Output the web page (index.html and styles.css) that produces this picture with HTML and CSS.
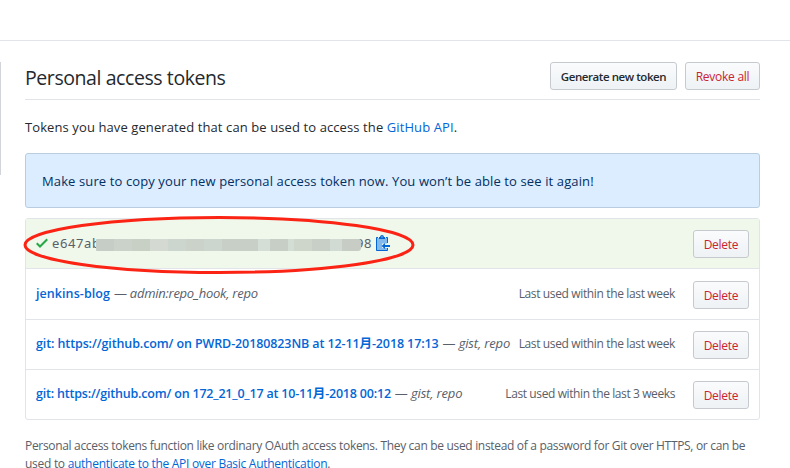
FILE: index.html
```html
<!DOCTYPE html>
<html lang="en">
<head>
<meta charset="utf-8">
<title>Personal access tokens</title>
<link rel="stylesheet" href="styles.css">
</head>
<body>
<header class="topbar"></header>
<div class="layout">
  <aside class="sidebar"></aside>
  <main class="content">
    <div class="subhead">
      <h2 class="title">Personal access tokens</h2>
      <div class="actions">
        <button class="btn btn-generate">Generate new token</button>
        <button class="btn danger btn-revoke">Revoke all</button>
      </div>
    </div>
    <p class="intro">Tokens you have generated that can be used to access the <a>GitHub API</a>.</p>
    <div class="flash"><span>Make sure to copy your new personal access token now. You won’t be able to see it again!</span></div>
    <ul class="tokens">
      <li class="row fresh">
        <svg class="check" viewBox="0 0 12 16" width="12" height="16"><path d="M12 5l-8 8-4-4 1.5-1.5L4 10l6.500-6.500z"/></svg>
        <code class="value">e647ab</code><span class="mask"></span><code class="value tail">98</code>
        <svg class="clip" viewBox="0 0 14 16" width="14" height="16"><path class="paper" d="M1 3h10v12H1z"/><path class="gap" d="M6 8.500h6v4.500H6z"/><path d="M9 10V8l-3.500 3L9 14v-2h5v-2H9zM11 13h1v2c0 .55-.45 1-1 1H1c-.55 0-1-.45-1-1V3c0-.55.450-1 1-1h1v1H1v12h10v-2zM3 2h1c.2-1.200 1-2 2-2s1.800.8 2 2h1v2H3V2zM10 2h1c.55 0 1 .45 1 1v5h-1V3h-1z"/><path class="gap" d="M5.500 1.500h1v1h-1z"/></svg>
        <button class="btn danger">Delete</button>
        <svg class="ring" viewBox="0 0 394 62" width="394" height="62"><ellipse cx="197" cy="31" rx="194" ry="27.500"/></svg>
      </li>
      <li class="row tall">
        <span class="name n1"><a>jenkins-blog</a></span><span class="scope s1">— <i>admin:repo_hook, repo</i></span>
        <span class="used">Last used within the last week</span>
        <button class="btn danger">Delete</button>
      </li>
      <li class="row">
        <span class="name n2"><a>git: https://github.com/ on PWRD-20180823NB at 12-11月-2018 17:13</a></span><span class="scope">— <i>gist, repo</i></span>
        <span class="used">Last used within the last week</span>
        <button class="btn danger">Delete</button>
      </li>
      <li class="row">
        <span class="name n3"><a>git: https://github.com/ on 172_21_0_17 at 10-11月-2018 00:12</a></span><span class="scope">— <i>gist, repo</i></span>
        <span class="used weeks">Last used within the last 3 weeks</span>
        <button class="btn danger">Delete</button>
      </li>
    </ul>
    <p class="note"><span class="l1">Personal access tokens function like ordinary OAuth access tokens. They can be used instead of a password for Git over HTTPS, or can be</span><br><span class="l2">used to <a>authenticate to the API over Basic Authentication</a>.</span></p>
  </main>
</div>
</body>
</html>
```
FILE: styles.css
```css
* { box-sizing: border-box; }
body {
  margin: 0;
  height: 468px;
  overflow: hidden;
  background: #fff;
  color: #24292e;
  font: 13px/21px "Open Sans", "Noto Sans CJK SC", sans-serif;
}
a { color: #0366d6; }
h2, p, ul { margin: 0; padding: 0; font-weight: 400; }
.topbar { height: 41px; border-bottom: 1px solid #e1e4e8; }
.layout { display: flex; padding-top: 21px; }
.sidebar { width: 1px; height: 113px; background: #d1d5da; }
.content { width: 735px; margin-left: 24px; }
.subhead {
  display: flex;
  justify-content: space-between;
  height: 38px;
  border-bottom: 1px solid #e1e4e8;
}
.title { font-size: 19.500px; line-height: 32px; letter-spacing: -.42px; white-space: nowrap; }
.actions { display: flex; gap: 8px; }
.btn {
  flex: none;
  width: 56px;
  height: 28px;
  padding: 1px 0 0;
  border: 1px solid #c6cace;
  border-radius: 3px;
  background: linear-gradient(#fafbfc, #eff3f6 90%);
  color: #24292e;
  font: 600 11.5px/20px "Open Sans", sans-serif;
  letter-spacing: -.43px;
  white-space: nowrap;
}
.danger { color: #cb2431; font-weight: 500; font-size: 12px; letter-spacing: -.25px; }
.btn-generate { width: 127px; }
.btn-revoke { width: 75px; }
.intro { margin-top: 17px; letter-spacing: .1px; white-space: nowrap; }
.flash {
  height: 55px;
  margin-top: 15px;
  padding: 17px 16px;
  border: 1px solid #b9cde0;
  border-radius: 3px;
  background: #dbedff;
  color: #032f62;
  letter-spacing: .115px;
  white-space: nowrap;
}
.tokens {
  margin-top: 10px;
  border: 1px solid #e1e4e8;
  border-radius: 3px;
  list-style: none;
}
.row {
  position: relative;
  display: flex;
  align-items: flex-start;
  height: 50px;
  padding: 11px 10px 0;
  border-bottom: 1px solid #e1e4e8;
  white-space: nowrap;
}
.row.tall { height: 51px; padding-top: 12px; }
.row:last-child { height: 49px; border-bottom: 0; }
.row .btn { margin-left: auto; }
.row .used + .btn { margin-left: 18px; }
.fresh { background: #f0f7eb; }
.check { margin-top: 5px; fill: #28a745; }
.value { margin: 3px 0 0 4px; color: #586069; font: 13px/21px "Noto Sans", sans-serif; letter-spacing: .6px; }
.mask {
  width: 265px;
  height: 12px;
  margin: 9px -5px 0 -4.500px;
  z-index: 1;
  border-radius: 1px 2px 3px 1px;
  background: linear-gradient(90deg, #c6cdc6 0 18px, #cad2ca 18px 36px, #c8d0c6 36px 54px, #d4dad1 54px 72px, #cdd6ce 72px 90px, #cbd2ca 90px 108px, #cdd6ce 108px 126px, #c8cfc6 126px 162px, #d4ddd6 162px 174px, #c7cec6 174px 192px, #d3ddd4 192px 198px, #ced5cb 198px 216px, #c7cfc6 216px 234px, #d1dad3 234px 246px, #c7cdc5 246px);
}
.value.tail { margin-left: 0; }
.clip { margin: 5px 0 0 4px; fill: #0366d6; }
.paper { fill: #84b9ec; }
.gap { fill: #f0f7eb; }
.ring { position: absolute; left: -4px; top: -5px; fill: none; stroke: #fb2314; stroke-width: 3; z-index: 2; }
.name { margin-top: 2px; font-size: 12.500px; font-weight: 600; }
.n1 { letter-spacing: .07px; }
.n2 { letter-spacing: -.11px; }
.n3 { letter-spacing: -.2px; }
.scope { margin: 2px 0 0 4px; color: #586069; letter-spacing: -.15px; }
.s1 { letter-spacing: -.26px; }
.used { margin: 2px 0 0 auto; color: #586069; font-size: 12px; letter-spacing: -.36px; }
.weeks { letter-spacing: -.4px; }
.note { margin-top: 17px; color: #586069; font-size: 12px; line-height: 18px; white-space: nowrap; }
.l1 { letter-spacing: -.32px; }
.l2 { letter-spacing: -.28px; }
```
